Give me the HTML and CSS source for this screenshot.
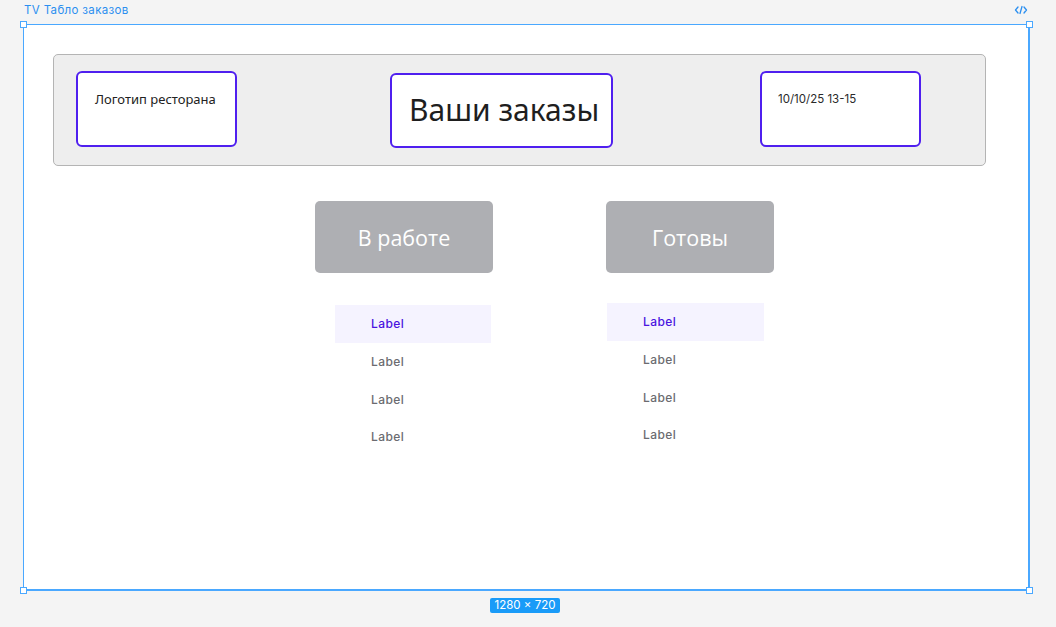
FILE: index.html
```html
<!DOCTYPE html>
<html lang="ru">
<head>
<meta charset="utf-8">
<title>TV Табло заказов</title>
<link rel="stylesheet" href="styles.css">
</head>
<body>
<div class="topbar">
  <span class="frame-title">TV Табло заказов</span>
  <span class="code-icon">
    <svg width="14" height="10" viewBox="0 0 14 10" fill="none" stroke="#2b8ff0" stroke-width="1.3" stroke-linecap="round" stroke-linejoin="round">
      <path d="M4 2 L1.5 5 L4 8"/>
      <path d="M8 1.5 L6 8.5"/>
      <path d="M10 2 L12.5 5 L10 8"/>
    </svg>
  </span>
</div>
<div class="frame-wrap">
  <div class="frame">
    <header class="header">
      <div class="box box-logo">Логотип ресторана</div>
      <div class="box box-title">Ваши заказы</div>
      <div class="box box-date">10/10/25 13-15</div>
    </header>
    <section class="columns">
      <div class="col col-work">
        <div class="btn btn-work">В работе</div>
        <ul class="list list-work">
          <li class="item active">Label</li>
          <li class="item">Label</li>
          <li class="item">Label</li>
          <li class="item">Label</li>
        </ul>
      </div>
      <div class="col col-ready">
        <div class="btn btn-ready">Готовы</div>
        <ul class="list list-ready">
          <li class="item active">Label</li>
          <li class="item">Label</li>
          <li class="item">Label</li>
          <li class="item">Label</li>
        </ul>
      </div>
    </section>
  </div>
  <span class="handle h-tl"></span>
  <span class="handle h-tr"></span>
  <span class="handle h-bl"></span>
  <span class="handle h-br"></span>
</div>
<div class="size-row"><span class="size-badge">1280 × 720</span></div>
</body>
</html>
```
FILE: styles.css
```css
* { box-sizing: border-box; }
html, body { margin: 0; padding: 0; }
body {
  background: #f4f4f4;
  width: 1056px;
  height: 627px;
  overflow: hidden;
  font-family: "Noto Sans", "Open Sans", sans-serif;
}
.topbar {
  height: 24px;
  display: flex;
  justify-content: space-between;
  align-items: flex-start;
  padding: 3px 28px 0 24px;
}
.frame-title {
  font-family: Inter, "Noto Sans", sans-serif;
  font-size: 11.5px;
  letter-spacing: 0.35px;
  line-height: 14px;
  color: #2b8ff0;
}
.code-icon { display: flex; padding-top: 2px; }
.frame-wrap {
  position: relative;
  margin-left: 23px;
  width: 1007px;
  height: 567px;
}
.frame {
  width: 100%;
  height: 100%;
  background: #fff;
  border: 1px solid #4aa8ff;
  border-right-width: 2px;
  border-bottom-width: 2px;
  padding: 29px 0 0 29px;
}
.handle {
  position: absolute;
  width: 7px;
  height: 7px;
  background: #fff;
  border: 1px solid #4aa8ff;
}
.h-tl { left: -3px; top: -3px; }
.h-tr { right: -3px; top: -3px; }
.h-bl { left: -3px; bottom: -3px; }
.h-br { right: -3px; bottom: -3px; }

.header {
  width: 933px;
  height: 112px;
  background: #eeeeee;
  border: 1.5px solid #b4b4b4;
  border-radius: 5px;
  display: flex;
  align-items: flex-start;
  padding: 16px 0 0 22px;
}
.box {
  background: #fff;
  border: 2px solid #4f1fef;
  border-radius: 6px;
  color: #222;
}
.box-logo {
  width: 161px;
  height: 76px;
  font-size: 13px;
  line-height: 18px;
  padding: 17px 0 0 17px;
}
.box-title {
  width: 223px;
  height: 75px;
  margin: 2px 0 0 153px;
  font-size: 30px;
  line-height: 38px;
  padding: 16px 0 0 17px;
  color: #1e1e1e;
}
.box-date {
  width: 161px;
  height: 76px;
  margin-left: 147px;
  font-family: Inter, "Noto Sans", sans-serif;
  font-size: 11.5px;
  line-height: 18px;
  padding: 17px 0 0 16px;
  color: #2a2a2a;
}

.columns {
  display: flex;
  align-items: flex-start;
  gap: 113px;
  margin: 35px 0 0 262px;
}
.col { display: flex; flex-direction: column; }
.btn {
  height: 72px;
  background: #aeafb3;
  border-radius: 5px;
  color: #fff;
  font-family: "Open Sans", "Noto Sans", sans-serif;
  font-size: 21.5px;
  display: flex;
  align-items: center;
  justify-content: center;
}
.btn-work { width: 178px; }
.btn-ready { width: 168px; }
.list {
  list-style: none;
  margin: 0;
  padding: 0;
}
.list-work { margin: 32px 0 0 20px; width: 156px; }
.list-ready { margin: 30px 0 0 1px; width: 157px; }
.item {
  height: 37.7px;
  display: flex;
  align-items: center;
  padding-left: 36px;
  font-family: Inter, "Noto Sans", sans-serif;
  font-weight: 500;
  font-size: 12px;
  letter-spacing: 0.4px;
  color: #6b6b70;
}
.item.active {
  background: #f5f3ff;
  color: #4a14e0;
}
.size-row {
  display: flex;
  justify-content: center;
  padding: 7px 0 0 0;
  margin-left: -6px;
}
.size-badge {
  background: #1a9bf8;
  color: #fff;
  font-family: Inter, "Noto Sans", sans-serif;
  font-size: 11.5px;
  line-height: 15px;
  padding: 0 5px;
  border-radius: 2px;
}
```
